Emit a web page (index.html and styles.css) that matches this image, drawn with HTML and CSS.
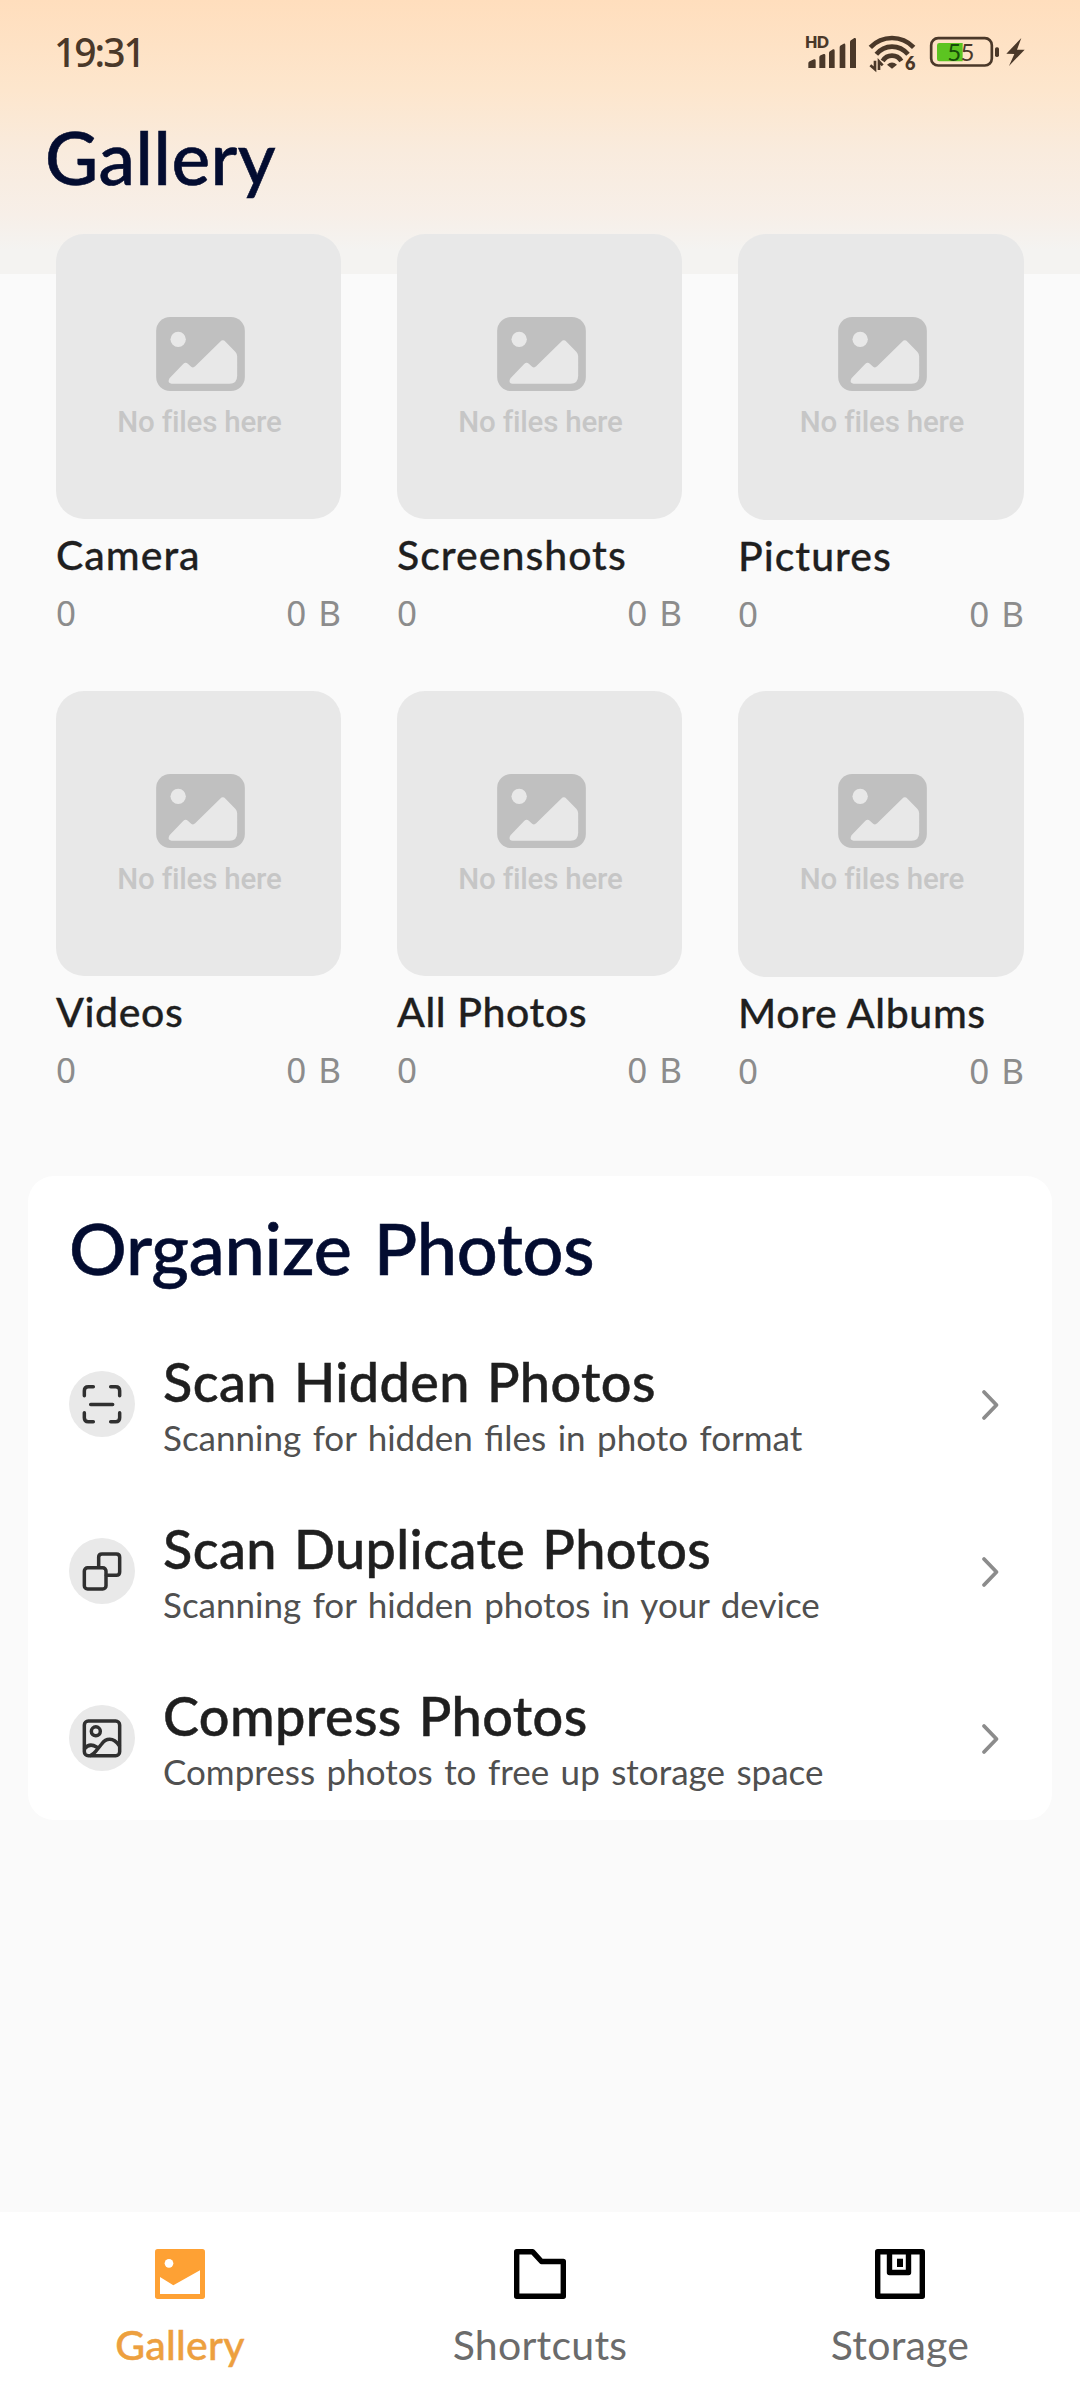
FILE: index.html
```html
<!DOCTYPE html>
<html lang="en">
<head>
<meta charset="utf-8">
<title>Gallery</title>
<link rel="stylesheet" href="styles.css">
</head>
<body>
<svg class="defs" aria-hidden="true">
  <symbol id="empty" viewBox="0 0 266 222">
    <rect width="266" height="222" rx="42" fill="#c0c0c0"/>
    <circle cx="66" cy="67" r="23" fill="#e8e8e8"/>
    <path d="M40 184 81 141Q88 134 95 140L105 149Q111 154 117 148L192 74Q200 66 208 74L238 105Q243 111 243 118V176Q243 200 220 200H46Q32 198 40 184Z" fill="#e8e8e8"/>
  </symbol>
  <symbol id="chevron" viewBox="0 0 20 32">
    <path d="M4 3 16.5 16 4 29" fill="none" stroke="#8c8c8c" stroke-width="3.8" stroke-linecap="round" stroke-linejoin="round"/>
  </symbol>
</svg>
<div class="app">
  <header class="header">
    <div class="status">
      <span class="time">19:31</span>
      <svg class="status-icons" viewBox="0 0 840 210" fill="#4a3829">
        <text class="hd" x="75" y="84">HD</text>
        <path d="M85 144v-14q0-4 4-6l13-6q5-1 5 4v22zM118 144v-32q0-4 4-6l9-4q5-1 5 4v38zM147 144V99q0-4 4-6l8-5q5-1 5 4v52zM179 144V82q0-4 4-6l8-5q5-1 5 4v69zM210 144V66q0-4 4-6l9-6q5-1 5 4v86z"/>
        <g fill="none" stroke="#4a3829" stroke-width="14">
          <path d="M271 82Q298 54 336 54T401 82M289 103Q308 80 336 80T384 103M308 123Q318 107 336 107T364 123"/>
          <path d="M285 122v26l-14-12M297 150v-26l11 12" stroke-width="8"/>
        </g>
        <path d="M321 134q15-13 30 0l-15 12z"/>
        <text class="six" x="375" y="150">6</text>
        <rect x="453.500" y="54.500" width="182" height="82" rx="21" fill="none" stroke="#4a3829" stroke-width="8"/>
        <path d="M478 69h70v55h-70q-7 0-7-7V76q0-7 7-7z" fill="#5cc421"/>
        <rect x="645" y="82" width="12" height="29" rx="5"/>
        <text class="charge" x="502" y="122"><tspan fill="#164d08">5</tspan><tspan>5</tspan></text>
        <path d="M724 54 679 101 703 102 687 138 734 89 711 89Z"/>
      </svg>
    </div>
    <h1 class="title">Gallery</h1>
  </header>

  <main class="main">
    <section class="albums">
      <article><div class="thumb"><svg class="empty"><use href="#empty"/></svg><span>No files here</span></div><h2 class="name">Camera</h2><p class="meta"><span>0</span><span>0 B</span></p></article>
      <article><div class="thumb"><svg class="empty"><use href="#empty"/></svg><span>No files here</span></div><h2 class="name">Screenshots</h2><p class="meta"><span>0</span><span>0 B</span></p></article>
      <article><div class="thumb"><svg class="empty"><use href="#empty"/></svg><span>No files here</span></div><h2 class="name">Pictures</h2><p class="meta"><span>0</span><span>0 B</span></p></article>
      <article><div class="thumb"><svg class="empty"><use href="#empty"/></svg><span>No files here</span></div><h2 class="name name-snug">Videos</h2><p class="meta"><span>0</span><span>0 B</span></p></article>
      <article><div class="thumb"><svg class="empty"><use href="#empty"/></svg><span>No files here</span></div><h2 class="name name-snug">All Photos</h2><p class="meta"><span>0</span><span>0 B</span></p></article>
      <article><div class="thumb"><svg class="empty"><use href="#empty"/></svg><span>No files here</span></div><h2 class="name name-snug">More Albums</h2><p class="meta"><span>0</span><span>0 B</span></p></article>
    </section>

    <section class="panel">
      <h2 class="panel-title">Organize Photos</h2>
      <div class="actions">
        <div class="action">
          <svg class="badge" viewBox="0 0 198 198">
            <path d="M46 74V59q0-12 12-12h15M125 47h15q12 0 12 12v15M152 125v15q0 12-12 12h-15M73 152H58q-12 0-12-12v-15M65 100.500h66"/>
          </svg>
          <div class="action-text"><h3>Scan Hidden Photos</h3><p>Scanning for hidden files in photo format</p></div>
          <svg class="chevron"><use href="#chevron"/></svg>
        </div>
        <div class="action">
          <svg class="badge" viewBox="0 0 198 198">
            <rect x="46" y="89" width="65" height="64" rx="10"/>
            <path d="M89 88V58q0-10 10-10h43q10 0 10 10v44q0 10-10 10h-30"/>
          </svg>
          <div class="action-text"><h3>Scan Duplicate Photos</h3><p>Scanning for hidden photos in your device</p></div>
          <svg class="chevron"><use href="#chevron"/></svg>
        </div>
        <div class="action">
          <svg class="badge" viewBox="0 0 198 198">
            <rect x="46" y="48" width="106" height="104" rx="12"/>
            <circle cx="80.500" cy="79" r="13.500"/>
            <path d="M151 122Q138 103 122 103 108 103 98 117L80 139Q73 148 65 151M47 131Q61 113 83 126"/>
          </svg>
          <div class="action-text"><h3>Compress Photos</h3><p>Compress photos to free up storage space</p></div>
          <svg class="chevron"><use href="#chevron"/></svg>
        </div>
      </div>
    </section>
  </main>

  <nav class="nav">
    <a class="tab tab-active">
      <svg width="50" height="50" viewBox="0 0 150 150"><rect width="150" height="150" rx="8" fill="#fea134"/><circle cx="42" cy="43" r="13" fill="#fff"/><path d="M15 84 55 109 135 64V135H15Z" fill="#fff"/></svg>
      <span>Gallery</span>
    </a>
    <a class="tab">
      <svg width="52" height="50" viewBox="0 0 52 50" fill="none" stroke="#000" stroke-width="5.400" stroke-linejoin="round"><path d="M2.700 2.700H18.500L27.500 12.500H49.300V47.300H2.700Z"/></svg>
      <span>Shortcuts</span>
    </a>
    <a class="tab">
      <svg width="50" height="50" viewBox="0 0 50 50" fill="none" stroke="#000" stroke-width="5.400" stroke-linejoin="round"><path d="M2.700 2.700H47.300V47.300H2.700ZM14.500 3V23.500H33.500V3"/><path d="M22 9.700h6v8.300h-6z" fill="#000" stroke="none"/></svg>
      <span>Storage</span>
    </a>
  </nav>
</div>
</body>
</html>
```
FILE: styles.css
```css
* { box-sizing: border-box; margin: 0; padding: 0; }

body {
  background: #fafafa;
  color: #1f1f1f;
  font-family: Lato, "Noto Sans", sans-serif;
}

h1, h2, h3 {
  font-weight: 500;
  -webkit-text-stroke: 0.300px currentColor;
}

.defs { display: none; }

.app {
  display: flex;
  flex-direction: column;
  width: 1080px;
  height: 2400px;
  background: linear-gradient(#ffdebd 0, #fde6cd 90px, #f9ebdd 150px, #f7efe8 215px, #f4f3f1 250px, #f4f3f1 274px) no-repeat 0 0 / 100% 274px;
}

.header { height: 234px; }

.status {
  display: flex;
  justify-content: space-between;
  height: 100px;
  padding: 0 20px 0 54px;
}

.time {
  color: #4a3829;
  font: 500 39px/104px "Noto Sans", sans-serif;
  letter-spacing: -2px;
}

.status-icons { width: 280px; height: 70px; margin-top: 20px; }
.hd { font: 800 48px Lato, sans-serif; letter-spacing: -2px; }
.six { font: 800 54px Lato, sans-serif; }
.charge { font: 400 72px Lato, sans-serif; letter-spacing: -2px; }

.title {
  margin-top: 15px;
  padding-left: 45px;
  color: #030c30;
  font-size: 73px;
  line-height: 84px;
  letter-spacing: 0.500px;
  -webkit-text-stroke-width: 0.600px;
}

.main { flex: 1; }

.albums {
  display: grid;
  grid-template-columns: 285px 285px 286px;
  gap: 54px 56px;
  padding: 0 56px;
}

.thumb {
  display: flex;
  flex-direction: column;
  align-items: center;
  gap: 13px;
  aspect-ratio: 1;
  padding: 82.500px 0 0 2px;
  border-radius: 28px;
  background: #e8e8e8;
  color: #c6c6c6;
  font: 500 29.500px/36px Roboto, sans-serif;
  letter-spacing: -0.200px;
}

.empty { width: 89px; height: 74px; flex: none; margin-left: 1px; }

.name {
  margin-top: 11px;
  font-size: 41px;
  line-height: 50px;
  letter-spacing: 1px;
}

.name-snug { letter-spacing: 0.600px; }

.meta {
  display: flex;
  justify-content: space-between;
  margin-top: 10px;
  color: #8c8c8c;
  font: 400 35px/46px "Noto Sans", sans-serif;
  word-spacing: 3px;
}

.panel {
  margin: 82px 28px 0;
  padding: 29px 41px 25px;
  border-radius: 26px;
  background: #fff;
}

.panel-title {
  color: #030c30;
  font-size: 72px;
  line-height: 84px;
  letter-spacing: -0.200px;
  word-spacing: 4px;
  -webkit-text-stroke-width: 0.600px;
}

.actions {
  display: grid;
  gap: 53px;
  margin-top: 58px;
}

.action {
  display: flex;
  align-items: center;
  gap: 28px;
  height: 114px;
}

.badge {
  width: 66px;
  height: 66px;
  border-radius: 50%;
  background: #e9e9e9;
  fill: none;
  stroke: #303030;
  stroke-width: 10.500;
  stroke-linecap: round;
  stroke-linejoin: round;
}

.action-text { flex: 1; padding-top: 3px; }

.action-text h3 {
  font-size: 54px;
  line-height: 60px;
  letter-spacing: 0.400px;
  word-spacing: 3px;
  -webkit-text-stroke-width: 0.500px;
}

.action-text p {
  margin-top: 3px;
  color: #505050;
  font-size: 35px;
  line-height: 44px;
  word-spacing: 2.500px;
}

.chevron { width: 20px; height: 32px; margin: 2px 11px 0 0; }

.nav {
  display: grid;
  grid-template-columns: repeat(3, 1fr);
  height: 188px;
  background: #fff;
}

.tab {
  display: flex;
  flex-direction: column;
  align-items: center;
  padding-top: 37px;
  color: #6b6b6b;
  font-size: 41px;
  line-height: 50px;
  letter-spacing: 0.250px;
}

.tab span { margin-top: 21px; }

.tab-active {
  color: #eda03f;
  font-weight: 500;
  -webkit-text-stroke: 0.400px currentColor;
}
```
